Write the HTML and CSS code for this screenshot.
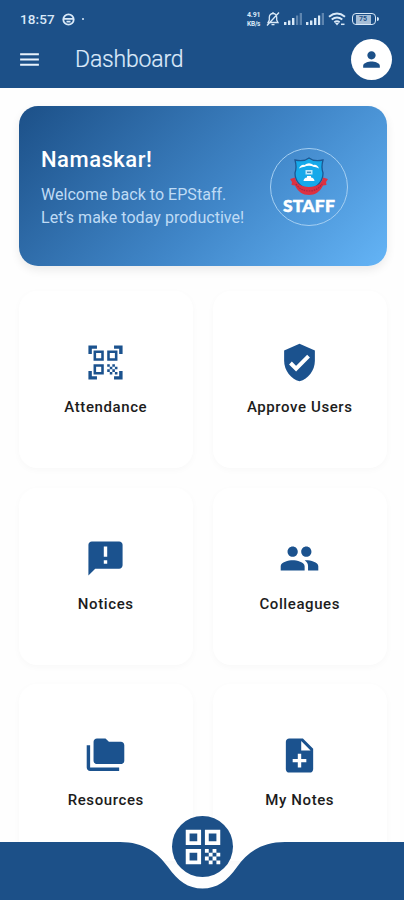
FILE: index.html
```html
<!DOCTYPE html>
<html lang="en">
<head>
<meta charset="utf-8">
<meta name="viewport" content="width=device-width, initial-scale=1">
<title>Dashboard</title>
<link rel="stylesheet" href="styles.css">
</head>
<body>
<div class="app">
  <header class="header">
    <div class="status">
      <span class="time">18:57</span>
      <svg class="face" viewBox="0 0 13 13"><circle cx="6.5" cy="6.5" r="5.2" fill="none" stroke="currentColor" stroke-width="1.8"/><path d="M2 5.8h9M4.5 8.7h4" stroke="currentColor" stroke-width="1.7"/></svg>
      <span class="dot"></span>
      <div class="indicators">
        <span class="speed"><b>4.91</b><b>KB/s</b></span>
        <svg width="14" height="16" viewBox="0 0 14 16" fill="none" stroke="currentColor" stroke-width="1.3"><path d="M2 11.5h10L10.7 9V6.2a3.7 3.7 0 0 0-7.4 0V9zM5.5 13.7h3M1 14.5 13 1.5M7 1v1.5"/></svg>
        <svg width="18" height="12" viewBox="0 0 18 12" fill="currentColor"><path d="M0 9h2.4v3H0zM4 7.5h2.4V12H4zM8 5h2.4v7H8z"/><path opacity=".35" d="M12 2.5h2.2V12H12zM15.7 0H18v12h-2.3z"/></svg>
        <svg width="18" height="12" viewBox="0 0 18 12" fill="currentColor"><path d="M0 9h2.4v3H0zM4 7.5h2.4V12H4zM8 5h2.4v7H8zM12 2.5h2.2V12H12z"/><path opacity=".35" d="M15.7 0H18v12h-2.3z"/></svg>
        <svg width="18" height="14" viewBox="0 0 18 14" fill="none" stroke="currentColor" stroke-width="1.9"><path d="M1 4.7q8-6.500 16 0M3.700 7.500q5.300-4.200 10.600 0M6.300 10.200q2.700-2 5.400 0"/><path d="m7 11 2 2.500 2-2.500z" fill="currentColor" stroke="none"/><path d="M13 12.300h3.500" stroke-width="1.500"/></svg>
        <span class="battery"><span class="level">75</span></span>
      </div>
    </div>
    <div class="toolbar">
      <svg class="menu" viewBox="0 0 24 24"><path d="M3 18h18v-2H3v2zm0-5h18v-2H3v2zm0-7v2h18V6H3z"/></svg>
      <h1>Dashboard</h1>
      <div class="avatar"><svg viewBox="0 0 24 24"><path d="M12 12c2.210 0 4-1.790 4-4s-1.790-4-4-4-4 1.790-4 4 1.790 4 4 4zm0 2c-2.670 0-8 1.340-8 4v2h16v-2c0-2.660-5.330-4-8-4z"/></svg></div>
    </div>
  </header>

  <main class="content">
    <section class="hero">
      <div class="greeting">
        <h2>Namaskar!</h2>
        <p>Welcome back to EPStaff.<br>Let’s make today productive!</p>
      </div>
      <div class="logo">
        <svg width="40" height="42" viewBox="0 0 40 42">
          <path d="M20 2q5 4 14 2-2 7 0 13c0 9-6 14-14 17C12 31 6 26 6 17q2-6 0-13 9 2 14-2z" fill="#16a9ea" stroke="#1c5792" stroke-width="1.3"/>
          <path d="M10 12.500q2-4.500 5.500-3.500 4.500-3.500 9 0 3.500-1 5.500 3.500-3-2-5-1.500-5-2.500-10 0-2-.5-5 1.500z" fill="#fff"/>
          <path d="M16.500 14h7v4.500h-7z" fill="#bde8fa"/><path d="M18 16.200h4" stroke="#1767a2"/>
          <path d="M14.500 25q.5-3.500 3.500-3.500V20h4v1.500q3 0 3.500 3.500z" fill="#fff"/>
          <path d="m1 23 5-1.500c1 6 6 9.500 14 9.500s13-3.500 14-9.500L39 23l-2 3 .5 3-3.500.5C31 36 26 39 20 39S9 36 6 29.500L2.500 29l.5-3z" fill="#dc3142"/>
          <path d="M7 28q4.500 7 13 7t13-7" fill="none" stroke="#a32548" stroke-width="1.2" stroke-dasharray="1.5 1"/>
        </svg>
        <span class="staff">STAFF</span>
      </div>
    </section>

    <section class="grid">
      <div class="card">
        <svg viewBox="0 0 24 24"><path d="M9.500 6.500v3h-3v-3h3M11 5H5v6h6V5zm-1.500 9.500v3h-3v-3h3M11 13H5v6h6v-6zm6.500-6.500v3h-3v-3h3M19 5h-6v6h6V5zm-6 8h1.500v1.500H13V13zm1.500 1.500H16V16h-1.500v-1.500zM16 13h1.500v1.500H16V13zm-3 3h1.500v1.500H13V16zm1.500 1.500H16V19h-1.500v-1.500zM16 16h1.500v1.500H16V16zm1.500-1.500H19V16h-1.500v-1.500zm0 3H19V19h-1.500v-1.500zM22 7h-2V4h-3V2h5v5zm0 15v-5h-2v3h-3v2h5zM2 22h5v-2H4v-3H2v5zM2 2v5h2V4h3V2H2z"/></svg>
        <span>Attendance</span>
      </div>
      <div class="card">
        <svg viewBox="0 0 24 24"><path d="M12 1 3 5v6c0 5.550 3.840 10.740 9 12 5.160-1.260 9-6.450 9-12V5l-9-4z"/><path class="tick" d="m6.700 12.300 3.300 3.300 7.300-7.300"/></svg>
        <span>Approve Users</span>
      </div>
      <div class="card">
        <svg viewBox="0 0 24 24"><path d="M20 2H4c-1.100 0-1.990.9-1.990 2L2 22l4-4h14c1.100 0 2-.9 2-2V4c0-1.100-.9-2-2-2zm-7 9h-2V5h2v6zm0 4h-2v-2h2v2z"/></svg>
        <span>Notices</span>
      </div>
      <div class="card">
        <svg viewBox="0 0 24 24"><path d="M16 11c1.660 0 2.990-1.340 2.990-3S17.660 5 16 5s-3 1.340-3 3 1.340 3 3 3zm-8 0c1.660 0 2.990-1.340 2.990-3S9.660 5 8 5 5 6.340 5 8s1.340 3 3 3zm0 2c-2.330 0-7 1.170-7 3.500V19h14v-2.500c0-2.330-4.670-3.500-7-3.500zm8 0c-.29 0-.62.020-.97.050 1.160.84 1.970 1.970 1.970 3.450V19h6v-2.500c0-2.330-4.670-3.500-7-3.500z"/></svg>
        <span>Colleagues</span>
      </div>
      <div class="card">
        <svg viewBox="0 0 24 24"><path d="M3 6H1v13c0 1.100.9 2 2 2h17v-2H3V6z"/><path d="M21 4h-7l-2-2H7c-1.100 0-1.990.9-1.990 2L5 15c0 1.100.9 2 2 2h14c1.100 0 2-.9 2-2V6c0-1.100-.9-2-2-2z"/></svg>
        <span>Resources</span>
      </div>
      <div class="card">
        <svg viewBox="0 0 24 24"><path d="M14 2H6c-1.100 0-1.990.9-1.990 2L4 20c0 1.100.89 2 1.990 2H18c1.100 0 2-.9 2-2V8l-6-6zm2 14h-3v3h-2v-3H8v-2h3v-3h2v3h3v2zm-3-7V3.500L18.500 9H13z"/></svg>
        <span>My Notes</span>
      </div>
    </section>
  </main>

  <nav class="nav">
    <svg class="bar" viewBox="0 0 404 58"><path d="M0 0H120C144 0 158 11 168 25C178 39 188 46.500 202.500 46.500S227 39 237 25C247 11 261 0 285 0H404V58H0Z"/></svg>
    <div class="fab"><svg viewBox="0 0 24 24"><path d="M3 11h8V3H3v8zm2-6h4v4H5V5zM3 21h8v-8H3v8zm2-6h4v4H5v-4zM13 3v8h8V3h-8zm6 6h-4V5h4v4zM19 19h2v2h-2zM13 13h2v2h-2zM15 15h2v2h-2zM13 17h2v2h-2zM15 19h2v2h-2zM17 17h2v2h-2zM17 13h2v2h-2zM19 15h2v2h-2z"/></svg></div>
  </nav>
</div>
</body>
</html>
```
FILE: styles.css
```css
* { box-sizing: border-box; }
body { margin: 0; background: #fefefe; font-family: Roboto, "Liberation Sans", sans-serif; }
svg { display: block; flex: none; }
h1, h2, p { margin: 0; }
.app { position: relative; width: 404px; height: 900px; overflow: hidden; display: flex; flex-direction: column; }

.header { height: 88px; flex: none; background: #1c5088; color: #d9e9f8; }
.status { height: 38px; padding: 0 25px 0 20px; display: flex; align-items: center; }
.time { width: 36px; font-size: 13.5px; font-weight: 500; letter-spacing: .1px; white-space: nowrap; }
.face { width: 13px; height: 13px; margin-left: 6px; }
.dot { width: 2px; height: 2px; margin-left: 7px; border-radius: 50%; background: currentColor; }
.indicators { margin-left: auto; display: flex; align-items: center; gap: 4px; }
.speed { width: 15px; display: flex; flex-direction: column; gap: 1px; font-size: 7px; line-height: 8px; }
.speed b { letter-spacing: -.2px; white-space: nowrap; }
.speed b + b { font-size: 6.5px; }
.battery { position: relative; width: 24px; height: 12px; margin-left: 2px; margin-right: 3px; padding: .5px; border: 1.5px solid currentColor; border-radius: 4px; display: flex; }
.battery::after { content: ""; position: absolute; right: -3.5px; top: 2.5px; width: 2px; height: 4px; background: currentColor; border-radius: 0 2px 2px 0; }
.level { width: 15px; margin-left: 2px; background: #a5bdd6; color: #1c5088; font-size: 7px; line-height: 9px; font-weight: 700; text-align: center; }
.toolbar { height: 42px; padding: 0 12.5px 0 17px; display: flex; align-items: center; }
.menu { width: 25px; height: 25px; fill: #e8f2fc; }
.toolbar h1 { margin-left: 33px; padding-top: 2px; font-size: 23px; line-height: 28px; font-weight: 300; letter-spacing: -.17px; color: #dceafa; -webkit-text-stroke: .2px #dceafa; }
.avatar { margin-left: auto; width: 41px; height: 41px; border-radius: 50%; background: #fff; display: grid; place-items: center; }
.avatar svg { width: 25px; height: 25px; fill: #1c5088; }

.content { padding: 18px 17px 0 18.5px; }
.hero { height: 160px; padding: 0 39px 0 22.5px; border-radius: 19px; background: linear-gradient(135deg, #1c5088 0%, #4086c8 56%, #64b4f6 100%); box-shadow: 0 4px 10px rgba(0,0,0,.08); display: flex; justify-content: space-between; align-items: center; }
.greeting { padding-top: 2px; color: #fff; }
.greeting h2 { font-size: 22px; line-height: 28px; font-weight: 500; letter-spacing: .5px; }
.greeting p { margin-top: 9px; font-size: 16px; line-height: 23px; letter-spacing: .03px; color: #bfdbf5; white-space: nowrap; }
.logo { width: 78px; height: 78px; margin-top: 2px; border: 1px solid #a5cff2; border-radius: 50%; display: flex; flex-direction: column; align-items: center; padding-top: 7px; }
.staff { margin-top: -1px; font: 900 17.5px/17px Lato, sans-serif; letter-spacing: .2px; color: #fff; -webkit-text-stroke: .5px #fff; }

.grid { margin-top: 25px; display: grid; grid-template-columns: 1fr 1fr; grid-auto-rows: 177px; gap: 19.5px; }
.card { border-radius: 18px; background: #fff; box-shadow: 0 2px 7px rgba(0,0,0,.027); display: flex; flex-direction: column; align-items: center; padding-top: 50.5px; }
.card svg { width: 41px; height: 41px; fill: #1b528e; }
.card .tick { fill: none; stroke: #fff; stroke-width: 2.3; }
.card span { margin-top: 14.5px; font-size: 15px; line-height: 20px; font-weight: 500; letter-spacing: .6px; color: #1c1c1c; white-space: nowrap; }

.nav { position: absolute; left: 0; bottom: 0; width: 404px; height: 58px; }
.bar { width: 404px; height: 58px; fill: #1c5088; }
.fab { position: absolute; left: 172px; top: -26px; width: 61px; height: 61px; border-radius: 50%; background: #1c5088; display: grid; place-items: center; }
.fab svg { width: 46px; height: 46px; fill: #fff; }
```
